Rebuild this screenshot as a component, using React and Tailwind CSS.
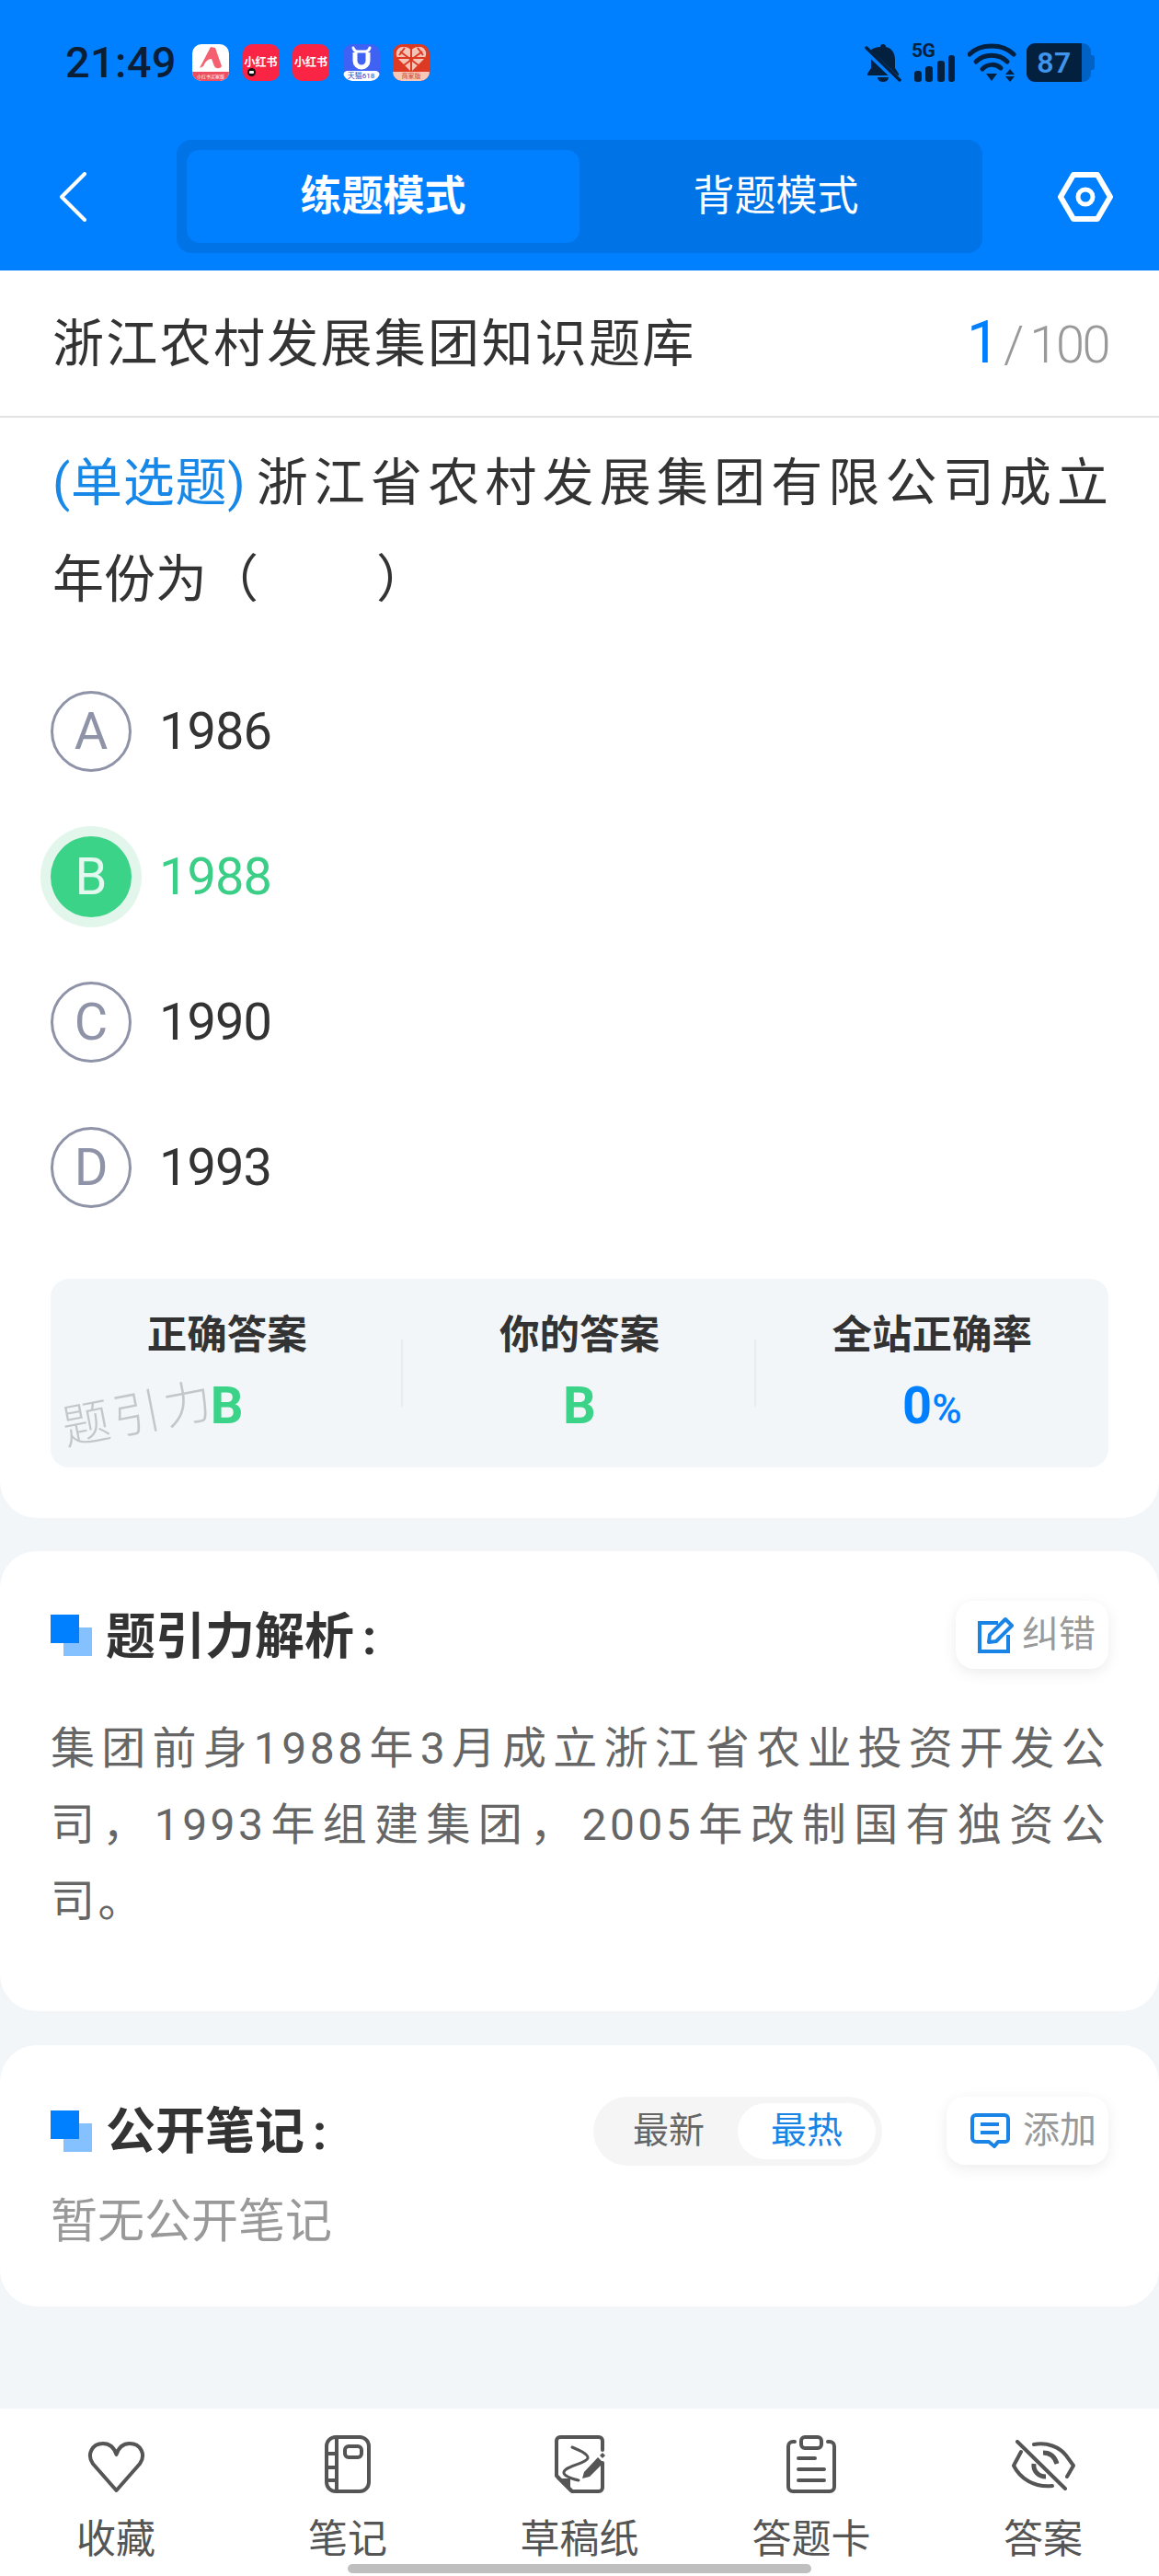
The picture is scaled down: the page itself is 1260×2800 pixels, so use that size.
import React from "react";

const FONT = "font-['Roboto','Noto_Sans_CJK_SC',sans-serif]";

function Bell() {
  return (
    <svg width="40" height="42" viewBox="0 0 40 42" fill="none">
      <path d="M20 1c2 0 3 1 3 3 7 1.500 10 7 10 14v9l4 6v2H3v-2l4-6V8l-.5 0C9 5 13 4 17 4c0-2 1-3 3-3z" fill="#04203f" />
      <path d="M14 37h12c0 3-3 5-6 5s-6-2-6-5z" fill="#04203f" />
      <path d="M0 6l38 36" stroke="#007fff" strokeWidth="7" />
      <path d="M2 5l36 35" stroke="#04203f" strokeWidth="3.500" strokeLinecap="round" />
    </svg>
  );
}

function Signal() {
  return (
    <div className="relative w-[50px] h-[42px]">
      <span className="absolute left-0 top-[-3px] text-[21px] leading-[22px] font-bold text-[#04203f] tracking-[-0.5px]">5G</span>
      <svg className="absolute left-0 top-0" width="50" height="42" viewBox="0 0 50 42">
        <rect x="3" y="30" width="8" height="12" rx="3" fill="#04203f" />
        <rect x="15" y="25" width="8" height="17" rx="3" fill="#04203f" />
        <rect x="28" y="19" width="8" height="23" rx="3" fill="#04203f" />
        <rect x="40" y="13" width="7" height="29" rx="3" fill="#04203f" />
      </svg>
    </div>
  );
}

function Wifi() {
  return (
    <svg width="53" height="42" viewBox="0 0 53 42" fill="none">
      <path d="M2 12C14 0 38 0 50 12" stroke="#04203f" strokeWidth="5" strokeLinecap="round" />
      <path d="M9 20C18 11 34 11 43 20" stroke="#04203f" strokeWidth="5" strokeLinecap="round" />
      <path d="M16 28C22 22 30 22 36 27" stroke="#04203f" strokeWidth="5" strokeLinecap="round" />
      <path d="M20 33h12l-6 8z" fill="#04203f" />
      <path d="M46 28l5 6H41z M41 36h10l-5 6z" fill="#04203f" />
    </svg>
  );
}

function Battery() {
  return (
    <div className="flex items-center">
      <div className="relative w-[70px] h-[42px] rounded-[9px] bg-[#0062c4] overflow-hidden">
        <div className="w-[60px] h-full bg-[#04203f] flex items-center justify-center text-[32px] font-semibold leading-none text-[#3f94ec] tracking-[0.5px]">87</div>
      </div>
      <div className="w-[4px] h-[16px] bg-[#0062c4] rounded-r-[3px]" />
    </div>
  );
}

function AppA() {
  return (
    <div className="relative w-[40px] h-[40px] rounded-[10px] bg-white overflow-hidden">
      <svg className="absolute left-0 top-0" width="40" height="32" viewBox="0 0 40 32">
        <path d="M8 26L20 3l5 1 7 20c-2 3-6 3-8 0l-3-8c-4 0-7 3-9 8z" fill="#f4606f" />
      </svg>
      <div className="absolute left-0 bottom-0 w-full h-[10px] bg-[#ef4d60] flex items-center justify-center text-[5px] leading-none text-white">小红书买家版</div>
    </div>
  );
}

function AppRed({ dot }) {
  return (
    <div className="relative w-[40px] h-[40px] rounded-[10px] bg-[#fa2444] flex items-center justify-center text-[12px] font-bold leading-none text-white">
      小红书
      {dot && <div className="absolute left-[5px] bottom-[5px] w-[9px] h-[9px] rounded-full bg-[#111] border-[2px] border-[#111] flex items-center justify-center"><div className="w-[5px] h-[3px] bg-white rounded-[1px]" /></div>}
    </div>
  );
}

function AppCat() {
  return (
    <div className="relative w-[40px] h-[40px] rounded-[10px] bg-[#3f62f4] overflow-hidden">
      <svg className="absolute left-0 top-0" width="40" height="32" viewBox="0 0 40 32" fill="none">
        <path d="M11 4c1 3 3 4 5 4h8c2 0 4-1 5-4" stroke="#fff" strokeWidth="3" strokeLinecap="round" />
        <path d="M13 9v9a7 7 0 0014 0V9" stroke="#fff" strokeWidth="5" />
      </svg>
      <div className="absolute left-0 bottom-0 w-full h-[11px] bg-white rounded-t-[5px] flex items-center justify-center text-[8px] leading-none text-[#2448c8]">天猫618</div>
    </div>
  );
}

function AppHeart() {
  return (
    <div className="relative w-[40px] h-[40px] rounded-[10px] bg-[#dd3a24] overflow-hidden">
      <svg className="absolute left-0 top-0" width="40" height="32" viewBox="0 0 40 32" fill="none">
        <path d="M20 30L6 16C1 10 5 2 12 3c4 0 7 2 8 4 1-2 4-4 8-4 7-1 11 7 6 13z" fill="#f3c4b8" />
        <path d="M8 8l24 18M32 8L8 26M20 5v25M5 15h30M13 4l-6 8M27 4l6 8" stroke="#dd3a24" strokeWidth="2" />
      </svg>
      <div className="absolute left-0 bottom-0 w-full h-[10px] bg-[#f7c8b8] flex items-center justify-center text-[7px] leading-none text-[#c8402a]">商家版</div>
    </div>
  );
}

function StatusBar() {
  return (
    <div className="flex items-center h-[42px] mt-[47px] pl-[71px] pr-[70px]">
      <span className="w-[118px] text-[47px] leading-[42px] font-medium text-[#0a1e36] tracking-[0.3px]">21:49</span>
      <div className="flex gap-[14.500px] ml-[20px]">
        <AppA />
        <AppRed dot />
        <AppRed />
        <AppCat />
        <AppHeart />
      </div>
      <div className="flex items-center ml-auto gap-[11px]">
        <Bell />
        <Signal />
        <Wifi />
        <Battery />
      </div>
    </div>
  );
}

function NavBar() {
  return (
    <div className="flex items-center h-[123px] mt-[63px] pl-[64px]">
      <svg width="30" height="54" viewBox="0 0 30 54" fill="none">
        <path d="M28 2L3 27l25 25" stroke="#fff" strokeWidth="4" strokeLinecap="round" strokeLinejoin="round" />
      </svg>
      <div className="flex w-[876px] h-[123px] ml-[98px] p-[11px] rounded-[16px] bg-[#0073e6]">
        <div className="flex flex-1 items-center justify-center rounded-[14px] bg-[#007fff] text-[45px] font-bold text-white">练题模式</div>
        <div className="flex flex-1 items-center justify-center text-[45px] text-white">背题模式</div>
      </div>
      <svg className="ml-[82px]" width="60" height="54" viewBox="0 0 60 54" fill="none">
        <path d="M17 3h26l14 24-14 24H17L3 27z" stroke="#fff" strokeWidth="6" strokeLinejoin="round" />
        <circle cx="30" cy="27" r="8" stroke="#fff" strokeWidth="5" />
      </svg>
    </div>
  );
}

function Option({ letter, text, active }) {
  return (
    <div className="flex items-center h-[88px]">
      {active ? (
        <div className="flex items-center justify-center w-[88px] h-[88px] rounded-full bg-[#3ad388] text-[56px] text-[#e3f8ee] shadow-[0_0_0_11px_#e3f6ec]">{letter}</div>
      ) : (
        <div className="flex items-center justify-center w-[88px] h-[88px] rounded-full border-[3px] border-[#8f93a8] text-[56px] text-[#8f93a8]">{letter}</div>
      )}
      <span className={"ml-[30px] text-[56px] tracking-[-1px] " + (active ? "text-[#3bce87]" : "text-[#333333]")}>{text}</span>
    </div>
  );
}

function Stat({ label, children, divider }) {
  return (
    <div className="relative flex flex-1 flex-col items-center pt-[34px]">
      <div className="text-[43.500px] leading-[56px] font-bold text-[#333333]">{label}</div>
      <div className="mt-[17px] text-[56px] leading-[62px] font-bold">{children}</div>
      {divider && <div className="absolute right-0 top-[66px] w-[2px] h-[73px] bg-[#e9ecef]" />}
    </div>
  );
}

function Squares() {
  return (
    <div className="relative w-[45px] h-[45px] shrink-0">
      <div className="absolute left-[14px] top-[14px] w-[31px] h-[31px] bg-[#85c0ff]" />
      <div className="absolute left-0 top-0 w-[31px] h-[31px] bg-[#007fff]" />
    </div>
  );
}

function EditIcon() {
  return (
    <svg width="40" height="40" viewBox="0 0 40 40" fill="none">
      <path d="M22 7H2v31h31V20" stroke="#1a84e6" strokeWidth="4" />
      <path d="M13 20L30 3l7 7-17 17-8 1z" stroke="#1a84e6" strokeWidth="4" strokeLinejoin="round" />
    </svg>
  );
}

function NoteIcon() {
  return (
    <svg width="43" height="38" viewBox="0 0 43 38" fill="none">
      <path d="M6 2h31a4 4 0 014 4v22a3 3 0 01-3 3H30l-4 5-6-5H6a4 4 0 01-4-4V6a4 4 0 014-4z" stroke="#1a84e6" strokeWidth="4" strokeLinejoin="round" />
      <path d="M11 12h20M11 21h20" stroke="#1a84e6" strokeWidth="4" />
    </svg>
  );
}

const ic = { stroke: "#555555", strokeWidth: 4, fill: "none", strokeLinecap: "round", strokeLinejoin: "round" };

function Heart() {
  return (
    <svg className="mt-[6px]" width="63" height="56" viewBox="0 0 63 56">
      <path d="M31.500 53L6 24C-1 14 5 2 17 2c7 0 12 4 14.500 12C34 6 39 2 46 2c12 0 18 12 11 22z" {...ic} />
    </svg>
  );
}

function Notebook() {
  return (
    <svg width="50" height="63" viewBox="0 0 50 63">
      <rect x="2" y="2" width="46" height="59" rx="10" {...ic} />
      <path d="M13 2v59M2 20h11M2 35h11M2 49h11" {...ic} />
      <rect x="22" y="12" width="18" height="12" rx="4" {...ic} />
    </svg>
  );
}

function Draft() {
  return (
    <svg width="56" height="63" viewBox="0 0 56 63">
      <path d="M53 16V6a4 4 0 00-4-4H7a4 4 0 00-4 4v38l17 17h29a4 4 0 004-4V30" {...ic} />
      <path d="M3 47l15 0 0 15z" fill="#555555" />
      <path d="M20 13c10 4 18 8 17 12-2 6-24 8-26 15-1 4 8 7 16 9" stroke="#555555" strokeWidth="3" fill="none" strokeLinecap="round" />
      <path d="M33 40l15-16 6 6-15 15-8 2z" fill="#555555" />
      <path d="M50 22l3-3 3 3-3 3z" fill="#555555" />
    </svg>
  );
}

function Clipboard() {
  return (
    <svg width="54" height="63" viewBox="0 0 54 63">
      <path d="M9 7H7a5 5 0 00-5 5v44a5 5 0 005 5h40a5 5 0 005-5V12a5 5 0 00-5-5h-2" {...ic} />
      <rect x="16" y="2" width="22" height="12" rx="4" {...ic} />
      <path d="M13 25h18M13 37h28M13 49h28" {...ic} />
    </svg>
  );
}

function EyeOff() {
  return (
    <svg className="mt-[2px]" width="69" height="55" viewBox="0 0 69 55">
      <path d="M6 2l52 51" {...ic} />
      <path d="M24 5c14-3 28 3 35 12l8 11-7 12" {...ic} />
      <path d="M10 13L2 28c7 14 22 24 42 22" {...ic} />
      <path d="M34 14c8 0 13 5 15 12" stroke="#555555" strokeWidth="5" fill="none" />
      <path d="M24 26c-1 8 5 14 13 14" stroke="#555555" strokeWidth="5" fill="none" />
    </svg>
  );
}

function Tab({ icon, label }) {
  return (
    <div className="flex flex-col items-center">
      <div className="flex items-center justify-center h-[63px]">{icon}</div>
      <div className="mt-[25px] text-[43px] leading-[50px] text-[#555555]">{label}</div>
    </div>
  );
}

export default function App() {
  return (
    <div className={"relative flex flex-col w-[1260px] h-[2800px] overflow-hidden bg-[#f2f6f9] " + FONT}>
      <div className="flex flex-col h-[294px] bg-[#007fff]">
        <StatusBar />
        <NavBar />
      </div>

      <div className="bg-white rounded-b-[40px] pb-[55px]">
        <div className="flex items-center justify-between h-[160px] pl-[57px] pr-[55px] pt-[2px] border-b-[2px] border-[#e2e2e2]">
          <span className="text-[56px] leading-[70px] tracking-[2.300px] text-[#333333]">浙江农村发展集团知识题库</span>
          <span className="flex items-baseline text-[#999999]">
            <span className="text-[64px] leading-[70px] text-[#007fff]">1</span>
            <span className="ml-[4px] text-[56px] font-light leading-[70px]">/</span>
            <span className="ml-[6px] text-[56px] font-light leading-[70px] tracking-[-2.500px]">100</span>
          </span>
        </div>

        <div className="pl-[57px] pr-[55px] pt-[19px] text-[56px] leading-[105px] text-[#333333]">
          <div className="flex">
            <span className="shrink-0 tracking-[0.800px] text-[#1787e8]">(单选题)</span>
            <div className="flex-1 ml-[11px] text-justify [text-align-last:justify]">浙江省农村发展集团有限公司成立</div>
          </div>
          <div className="flex">
            <span>年份为（</span>
            <span className="w-[128px]" />
            <span>）</span>
          </div>
        </div>

        <div className="flex flex-col gap-[70px] mt-[68px] pl-[55px]">
          <Option letter="A" text="1986" />
          <Option letter="B" text="1988" active />
          <Option letter="C" text="1990" />
          <Option letter="D" text="1993" />
        </div>

        <div className="relative flex h-[205px] mx-[55px] mt-[77px] rounded-[20px] bg-[#f2f6f9]">
          <Stat label="正确答案" divider><span className="text-[#3ad388]">B</span></Stat>
          <Stat label="你的答案" divider><span className="text-[#3ad388]">B</span></Stat>
          <Stat label="全站正确率">
            <span className="text-[#007fff]">0<span className="text-[44px] font-medium">%</span></span>
          </Stat>
          <div className="absolute left-[12px] top-[118px] -rotate-[11deg] text-[52px] leading-[60px] tracking-[4px] font-light text-[#c4c6c8]">题引力</div>
        </div>
      </div>

      <div className="h-[500px] mt-[36px] rounded-[40px] bg-white px-[55px] pt-[54px]">
        <div className="flex items-center justify-between h-[74px]">
          <div className="flex items-center">
            <Squares />
            <span className="ml-[15px] pt-[5px] text-[54px] leading-[74px] font-bold text-[#333333]">题引力解析<span className="ml-[9px]">:</span></span>
          </div>
          <div className="flex items-center w-[166px] h-[74px] pl-[24px] rounded-[20px] bg-white shadow-[0_4px_16px_rgba(0,0,0,0.08)]">
            <EditIcon />
            <span className="ml-[8px] text-[40px] text-[#999999]">纠错</span>
          </div>
        </div>
        <div className="mt-[45px] text-[48px] leading-[83px] tracking-[3.500px] text-justify text-[#666666]">
          集团前身1988年3月成立浙江省农业投资开发公司，1993年组建集团，2005年改制国有独资公司。
        </div>
      </div>

      <div className="h-[284px] mt-[37px] rounded-[40px] bg-white px-[55px] pt-[56px]">
        <div className="flex items-center h-[74px]">
          <Squares />
          <span className="ml-[15px] pt-[3px] text-[54px] leading-[74px] font-bold text-[#333333]">公开笔记<span className="ml-[9px]">:</span></span>
          <div className="flex items-center w-[314px] h-[75px] ml-auto pl-[7px] pr-[7px] rounded-full bg-[#f5f5f5]">
            <span className="flex-1 text-center text-[39px] text-[#666666]">最新</span>
            <span className="flex items-center justify-center w-[150px] h-[61px] rounded-full bg-white text-[39px] text-[#1a84e6]">最热</span>
          </div>
          <div className="flex items-center w-[176px] h-[74px] ml-[70px] pl-[26px] rounded-[20px] bg-white shadow-[0_4px_16px_rgba(0,0,0,0.08)]">
            <NoteIcon />
            <span className="ml-[14px] text-[40px] text-[#999999]">添加</span>
          </div>
        </div>
        <div className="mt-[32px] text-[51px] leading-[60px] text-[#999999]">暂无公开笔记</div>
      </div>

      <div className="mt-auto grid grid-cols-5 h-[182px] pt-[29px] bg-white">
        <Tab icon={<Heart />} label="收藏" />
        <Tab icon={<Notebook />} label="笔记" />
        <Tab icon={<Draft />} label="草稿纸" />
        <Tab icon={<Clipboard />} label="答题卡" />
        <Tab icon={<EyeOff />} label="答案" />
      </div>
      <div className="absolute left-[378px] bottom-[3px] w-[504px] h-[10px] rounded-full bg-[#bfbfbf]" />
    </div>
  );
}
